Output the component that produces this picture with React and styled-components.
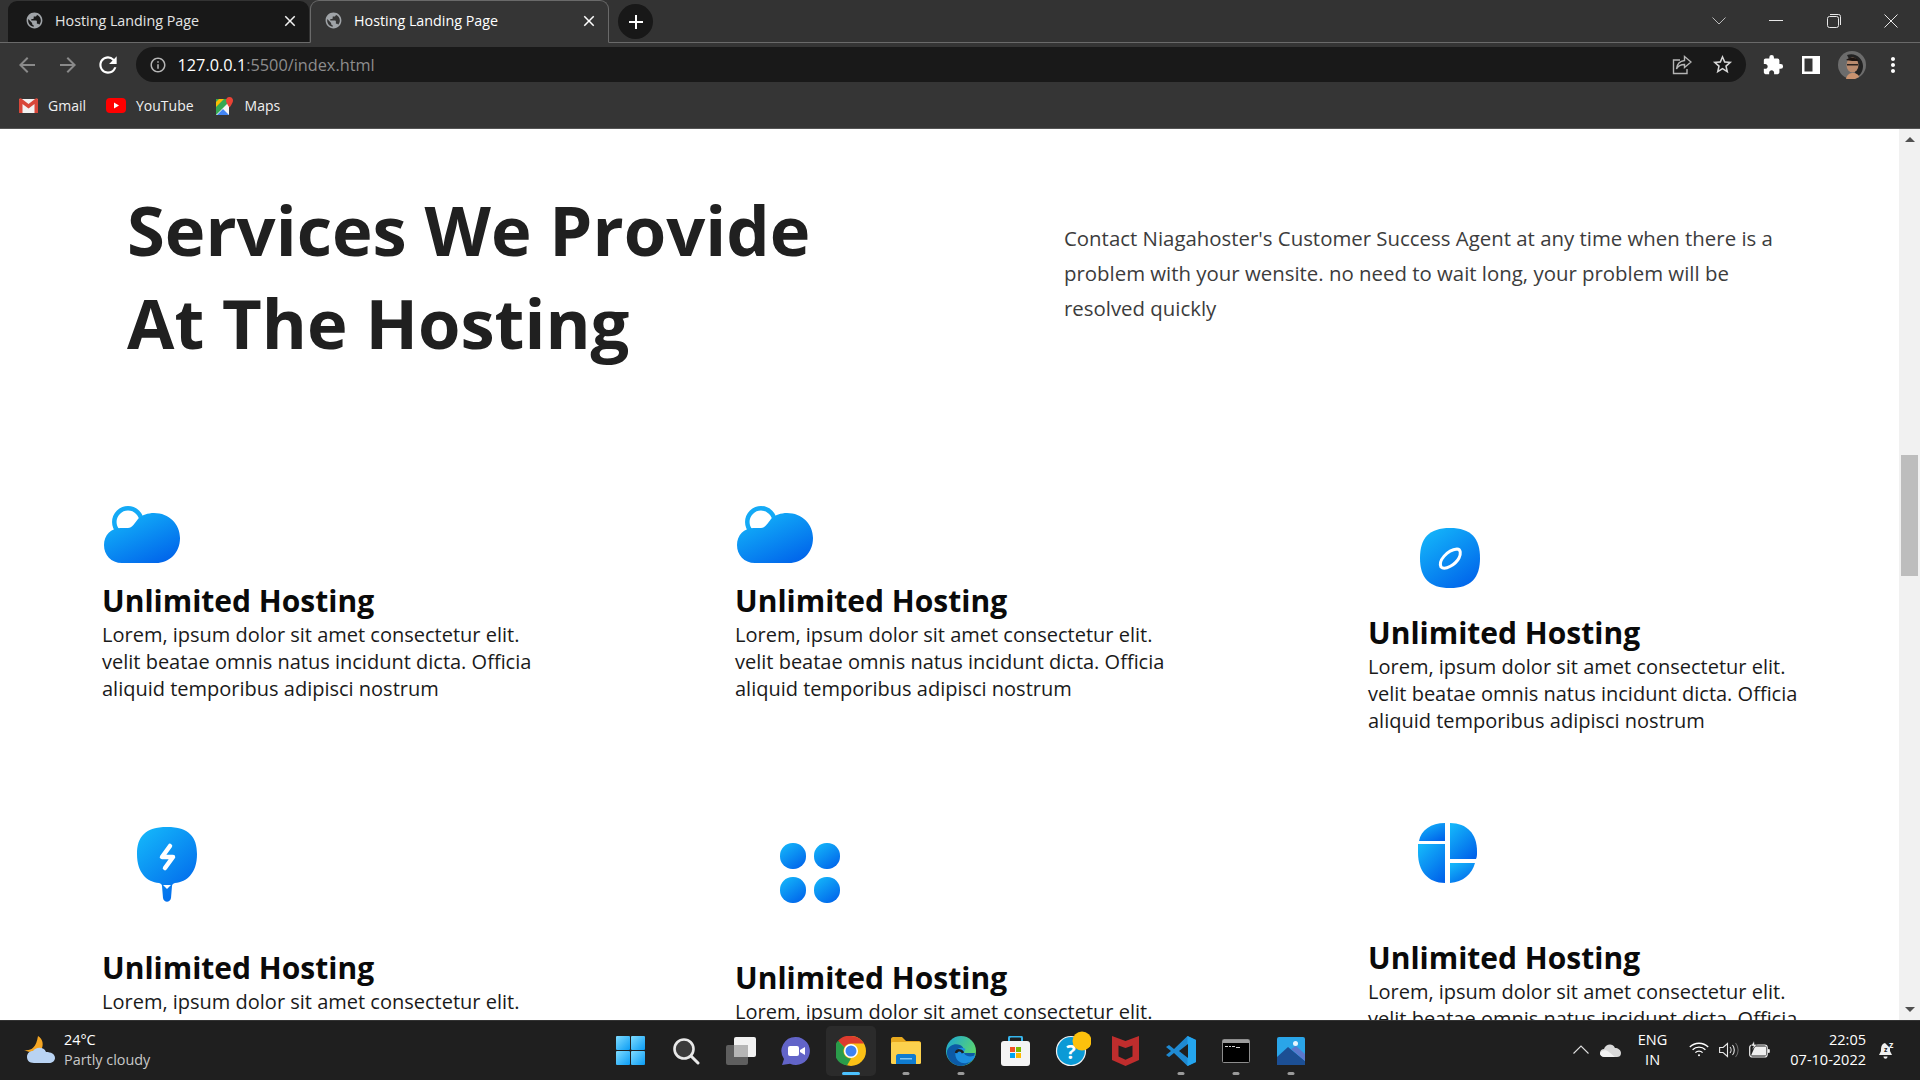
import React from 'react'
import styled, { createGlobalStyle } from 'styled-components'
import { MdPublic, MdClose, MdAdd, MdArrowBack, MdArrowForward, MdRefresh, MdInfoOutline, MdStarBorder, MdExtension, MdMoreVert } from 'react-icons/md'

const Global = createGlobalStyle`
    html, body { margin: 0; padding: 0; height: 100%; overflow: hidden; }
    body { font-family: "Open Sans", "Noto Sans", sans-serif; }
    * { box-sizing: border-box; }
`

const Screen = styled.div`
    width: 1920px;
    height: 1080px;
    display: flex;
    flex-direction: column;
    overflow: hidden;
    background: #fff;
`

/* browser chrome */
const TabStrip = styled.div`
    height: 43px;
    flex: none;
    display: flex;
    align-items: flex-end;
    padding-left: 8px;
    background: #333333;
    border-bottom: 1px solid #6a6a6a;
`
const Tab = styled.div`
    width: ${p => (p.$active ? 299 : 301)}px;
    height: ${p => (p.$active ? 43 : 41)}px;
    margin-bottom: ${p => (p.$active ? -1 : 0)}px;
    margin-right: 1px;
    display: flex;
    align-items: center;
    padding: 0 ${p => (p.$active ? 10 : 10)}px 2px ${p => (p.$active ? 13 : 17)}px;
    gap: 11px;
    border-radius: 9px 9px 0 0;
    font-size: 14.3px;
    color: ${p => (p.$active ? '#fff' : '#e4e4e4')};
    background: ${p => (p.$active ? '#353535' : '#181818')};
    border: ${p => (p.$active ? '1px solid #6a6a6a' : 'none')};
    border-bottom: ${p => (p.$active ? '1px solid #353535' : 'none')};
    svg { flex: none; }
`
const TabTitle = styled.span`
    flex: 1;
    white-space: nowrap;
`
const NewTab = styled.div`
    width: 35px;
    height: 35px;
    margin: 0 0 3px 8px;
    border-radius: 50%;
    background: #181818;
    color: #fff;
    display: flex;
    align-items: center;
    justify-content: center;
`
const WindowControls = styled.div`
    margin-left: auto;
    align-self: center;
    display: flex;
    align-items: center;
`
const WindowButton = styled.div`
    width: 57.5px;
    height: 26px;
    display: flex;
    align-items: center;
    justify-content: center;
`
const Toolbar = styled.div`
    height: 43px;
    flex: none;
    display: flex;
    align-items: center;
    background: #353535;
    padding-left: 15px;
`
const NavButton = styled.div`
    width: 40.5px;
    display: flex;
    margin-left: ${p => (p.$dim ? 0 : -1)}px;
    color: ${p => (p.$dim ? '#8a8a8a' : '#fff')};
`
const UrlBar = styled.div`
    width: 1610px;
    height: 35px;
    border-radius: 18px;
    background: #191919;
    display: flex;
    align-items: center;
    padding: 0 12px 0 13px;
    color: #b5b5b5;
`
const UrlText = styled.div`
    margin-left: 11px;
    font-size: 16.3px;
    color: #8d8d8d;
    white-space: nowrap;
`
const UrlHost = styled.span`
    color: #fff;
`
const UrlActions = styled.div`
    margin-left: auto;
    display: flex;
    align-items: center;
    gap: 19px;
`
const ToolIcons = styled.div`
    display: flex;
    align-items: center;
    margin-left: 16px;
    gap: 18px;
    color: #fff;
`
const Kebab = styled.div`
    display: flex;
    margin-left: -3px;
`
const BookmarkBar = styled.div`
    height: 43px;
    flex: none;
    display: flex;
    align-items: center;
    padding: 0 0 3px 19px;
    background: #353535;
    border-bottom: 1px solid #555;
`
const Bookmark = styled.div`
    display: flex;
    align-items: center;
    gap: ${p => p.$gap}px;
    margin-right: ${p => p.$mr}px;
    font-size: 14px;
    color: #f0f0f0;
`

/* page */
const Viewport = styled.div`
    flex: 1;
    min-height: 0;
    display: flex;
`
const Page = styled.main`
    flex: 1;
    min-width: 0;
    overflow: hidden;
    padding-top: 54px;
`
const Hero = styled.section`
    display: grid;
    grid-template-columns: 937px 740px;
    padding-left: 127px;
    margin-bottom: 136px;
`
const Heading = styled.h1`
    margin: 0;
    font-size: 68.7px;
    line-height: 93px;
    font-weight: 700;
    color: #202020;
`
const Intro = styled.p`
    margin: 38px 0 0;
    font-size: 20.4px;
    line-height: 35px;
    color: #3c3c3c;
`
const Services = styled.section`
    display: grid;
    grid-template-columns: repeat(3, 633px);
    grid-auto-rows: 315px;
    padding-left: 102px;
`
const Card = styled.article`
    width: 460px;
`
const IconSlot = styled.div`
    height: ${p => p.$height}px;
    padding: ${p => p.$top}px 0 0 ${p => p.$left}px;
    svg { display: block; }
`
const CardTitle = styled.h3`
    margin: 0;
    font-size: 30px;
    line-height: 40px;
    font-weight: 700;
    color: #0a0a0a;
`
const CardText = styled.p`
    margin: 0;
    font-size: 20px;
    line-height: 27px;
    color: #1a1a1a;
`
const Scrollbar = styled.div`
    width: 21px;
    flex: none;
    background: #f1f1f1;
    display: flex;
    flex-direction: column;
    align-items: center;
    padding-top: 8px;
`
const ArrowUp = styled.div`
    width: 0;
    height: 0;
    border-left: 5px solid transparent;
    border-right: 5px solid transparent;
    border-bottom: 5px solid #505050;
`
const ArrowDown = styled(ArrowUp)`
    margin-top: auto;
    margin-bottom: 8px;
    border-bottom: none;
    border-top: 5px solid #505050;
`
const Thumb = styled.div`
    width: 17px;
    height: 121px;
    margin-top: 313px;
    background: #bdbdbd;
`

/* taskbar */
const Taskbar = styled.footer`
    height: 60px;
    flex: none;
    display: grid;
    grid-template-columns: 1fr auto 1fr;
    align-items: center;
    background: #1f1f1f;
    border-top: 1px solid #333;
    color: #fff;
`
const Weather = styled.div`
    display: flex;
    align-items: center;
    padding: 0 0 2px 24px;
    gap: 9px;
`
const WeatherText = styled.div`
    font-size: 14.4px;
    line-height: 20px;
`
const WeatherSub = styled.div`
    color: #c8c8c8;
`
const AppRow = styled.div`
    display: flex;
    gap: 5px;
    margin-left: 1px;
`
const AppButton = styled.div`
    position: relative;
    width: 50px;
    height: 50px;
    border-radius: 5px;
    display: flex;
    align-items: center;
    justify-content: center;
    background: ${p => (p.$active ? '#2b2b2b' : 'transparent')};
`
const RunDot = styled.span`
    position: absolute;
    bottom: 1px;
    left: 50%;
    height: 3px;
    width: ${p => (p.$active ? 18 : 7)}px;
    transform: translateX(-50%);
    border-radius: 2px;
    background: ${p => (p.$active ? '#4cc2ff' : '#9a9a9a')};
`
const Tray = styled.div`
    display: flex;
    align-items: center;
    justify-content: flex-end;
    padding: 0 24px 2px 0;
    font-size: 14.5px;
    line-height: 20px;
`
const TrayIcon = styled.div`
    display: flex;
    margin-right: ${p => p.$mr || 0}px;
`
const Lang = styled.div`
    text-align: center;
    margin-right: 22px;
`
const Clock = styled.div`
    text-align: right;
    margin-right: 12px;
`

/* drawings */
const Blue = ({ id }) => (
    <defs>
        <linearGradient id={id} x1="0.15" y1="0" x2="0.85" y2="1">
            <stop offset="0" stopColor="#14b6fa" />
            <stop offset="1" stopColor="#0062ea" />
        </linearGradient>
    </defs>
)

const CloudIcon = ({ id }) => (
    <svg width="78" height="60" viewBox="0 0 78 60">
        <Blue id={id} />
        <circle cx="24" cy="17" r="13.700" fill="none" stroke="#14aaf6" strokeWidth="4.500" />
        <path d="M18 58C7 58 0 50 0 40c0-10 7-17 17-17h7c4 0 7-5 10-9 4-4 10-6 16-6 15 0 26 11 26 25 0 15-11 25-24 25z" fill={`url(#${id})`} />
    </svg>
)

const CompassIcon = ({ id }) => (
    <svg width="60" height="60" viewBox="0 0 60 60">
        <Blue id={id} />
        <path d="M30 0c21 0 30 10 30 30S51 60 30 60 0 50 0 30 9 0 30 0z" fill={`url(#${id})`} />
        <path d="M21 39c-3-6 6-17 16-18 4 0 4 5 2 9-3 6-14 13-18 9z" fill="none" stroke="#fff" strokeWidth="3" />
    </svg>
)

const BoltIcon = ({ id }) => (
    <svg width="60" height="75" viewBox="0 0 60 75">
        <Blue id={id} />
        <path d="M30 0c22 0 30 10 30 27 0 19-10 28-22 29-2 .5-3 1.500-3 3l-1 12c-1 5-7 5-8 0l-1-12c0-1.500-1-2.500-3-3C10 55 0 46 0 27 0 10 8 0 30 0z" fill={`url(#${id})`} />
        <path d="M33 19l-8 11h11l-8 11" fill="none" stroke="#fff" strokeWidth="4.500" strokeLinecap="round" strokeLinejoin="round" />
        <path d="M26 58h8l-4 4z" fill="#fff" />
    </svg>
)

const DotsIcon = ({ id }) => (
    <svg width="60" height="60" viewBox="0 0 60 60">
        <Blue id={id} />
        <g fill={`url(#${id})`}>
            <rect x="0" y="0" width="26" height="26" rx="12.500" />
            <rect x="34" y="0" width="26" height="26" rx="12.500" />
            <rect x="0" y="34" width="26" height="26" rx="12.500" />
            <rect x="34" y="34" width="26" height="26" rx="12.500" />
        </g>
    </svg>
)

const PieIcon = ({ id }) => (
    <svg width="59" height="60" viewBox="0 0 59 60">
        <Blue id={id} />
        <g fill={`url(#${id})`}>
            <path d="M27 0v18H1C3 7 13 0 27 0z" />
            <path d="M0 21h27v39C10 60 0 48 0 30z" />
            <path d="M32 0c17 0 27 11 27 28 0 4 0 6-1 8H32z" />
            <path d="M32 40h25c-3 11-12 19-25 20z" />
        </g>
    </svg>
)

const ShareIcon = () => (
    <svg width="20" height="20" viewBox="0 0 20 20" fill="none" stroke="#b5b5b5" strokeWidth="1.400">
        <path d="M8 5H1.500v13.500H15V14" />
        <path d="M12.500 1.500L19 7l-6.500 5.500V9.500C8.500 9.500 6 11 4.500 14c.5-5 3.500-8 8-8.500z" />
    </svg>
)

const PanelIcon = () => (
    <svg width="18" height="18" viewBox="0 0 18 18">
        <path d="M0 0h18v18H0z" fill="#fff" />
        <path d="M2.500 2.500h8v13h-8z" fill="#353535" />
    </svg>
)

const Avatar = () => (
    <svg width="28" height="28" viewBox="0 0 28 28">
        <circle cx="14" cy="14" r="14" fill="#6c6c6c" />
        <path d="M9 4c8-3 16 3 16 11 0 6-3 9-6 11l-6-14z" fill="#222" />
        <ellipse cx="14.500" cy="14" rx="6" ry="7.500" fill="#b98a6d" />
        <path d="M8 9c4-3 10-3 13 1-5 0-9 0-13-1z" fill="#1d1512" />
        <path d="M9 13h11v1.500H9z" fill="#2a2320" />
        <path d="M8 28c1-5 4-6 7-6s6 2 6 4l-4 2z" fill="#c9926f" />
    </svg>
)

const GmailIcon = () => (
    <svg width="19" height="15" viewBox="0 0 19 15">
        <path d="M0 1h19v14H0z" fill="#f2f2f2" />
        <path d="M0 15V2c0-2 2-2 3-1l6.500 5L16 1c1-1 3-1 3 1v13h-3.500V6L9.500 10.500 3.500 6v9z" fill="#d8473a" />
    </svg>
)

const YoutubeIcon = () => (
    <svg width="20" height="15" viewBox="0 0 20 15">
        <rect width="20" height="15" rx="4" fill="#f00" />
        <path d="M8 4.500l5 3-5 3z" fill="#fff" />
    </svg>
)

const MapsIcon = () => (
    <svg width="18" height="18" viewBox="0 0 18 18">
        <path d="M0 2h13v16H0z" fill="#35a853" />
        <path d="M0 18L13 5v13z" fill="#f4f4f4" />
        <path d="M1 18l6-6 6 6z" fill="#4285f4" />
        <path d="M3 2h5L0 10V5z" fill="#fbbc04" />
        <path d="M13.500 0C11 0 10 2 10 3.500c0 2.500 3.500 7 3.500 7S17 6 17 3.500C17 2 16 0 13.500 0z" fill="#ea4335" />
    </svg>
)

const WeatherIcon = () => (
    <svg width="31" height="28" viewBox="0 0 31 28">
        <path d="M14 0c5 3 6 9 3 14-3 3-11 3-17 0 6 1 12-1 14-14z" fill="#f5a623" />
        <path d="M10 27c-5 0-7-3-7-6 0-4 3-6 6-6 2-4 11-5 13 1 5 0 9 2 9 6 0 3-3 5-6 5z" fill="#b9d3f3" />
    </svg>
)

const WindowsIcon = () => (
    <svg width="29" height="29" viewBox="0 0 29 29">
        <defs>
            <linearGradient id="win" x1="0" y1="0" x2="1" y2="1">
                <stop offset="0" stopColor="#7fdcff" />
                <stop offset="1" stopColor="#0a9cf5" />
            </linearGradient>
        </defs>
        <g fill="url(#win)">
            <rect width="14" height="14" rx="1" />
            <rect x="15" width="14" height="14" rx="1" />
            <rect y="15" width="14" height="14" rx="1" />
            <rect x="15" y="15" width="14" height="14" rx="1" />
        </g>
    </svg>
)

const SearchIcon = () => (
    <svg width="28" height="28" viewBox="0 0 28 28" fill="none">
        <circle cx="12" cy="12" r="9.500" fill="#3a3a3a" stroke="#e8e8e8" strokeWidth="2.600" />
        <path d="M19 19l7 7" stroke="#e8e8e8" strokeWidth="3" strokeLinecap="round" />
    </svg>
)

const TaskViewIcon = () => (
    <svg width="30" height="28" viewBox="0 0 30 28">
        <rect y="8" width="22" height="20" rx="2" fill="#5e5e5e" />
        <rect x="8" width="22" height="20" rx="2" fill="#f2f2f2" />
        <rect x="8" y="8" width="14" height="12" fill="#b5b5b5" />
    </svg>
)

const ChatIcon = () => (
    <svg width="30" height="30" viewBox="0 0 30 30">
        <path d="M15 1a14 14 0 1 1-6 26.700L1 29l2-6A14 14 0 0 1 15 1z" fill="#6264c8" />
        <rect x="7" y="10" width="11" height="10" rx="2" fill="#fff" />
        <path d="M19 14l5-3v8l-5-3z" fill="#fff" />
    </svg>
)

const ChromeIcon = () => (
    <svg width="30" height="30" viewBox="0 0 30 30">
        <circle cx="15" cy="15" r="15" fill="#fbc116" />
        <path d="M15 0a15 15 0 0 1 13 7.500H15a7.500 7.500 0 0 0-6.500 3.750L2 4.800A15 15 0 0 1 15 0z" fill="#dd3b2e" />
        <path d="M2 4.800l6.500 6.450A7.500 7.500 0 0 0 15 22.500l-4 7A15 15 0 0 1 2 4.800z" fill="#2a9c4a" />
        <circle cx="15" cy="15" r="7" fill="#fff" />
        <circle cx="15" cy="15" r="5.500" fill="#3f82f0" />
    </svg>
)

const FolderIcon = () => (
    <svg width="30" height="27" viewBox="0 0 30 27">
        <path d="M0 2c0-1 1-2 2-2h9l4 4h13c1 0 2 1 2 2v4H0z" fill="#e8a91e" />
        <rect y="5" width="30" height="22" rx="1.500" fill="#fcd14d" />
        <path d="M5 27v-8c0-1 1-2 2-2h16c1 0 2 1 2 2v8z" fill="#0f7cd0" />
        <path d="M9 21h12v1.500H9z" fill="#7fc6f5" />
    </svg>
)

const EdgeIcon = () => (
    <svg width="30" height="30" viewBox="0 0 30 30">
        <defs>
            <linearGradient id="edge" x1="0" y1="0" x2="1" y2="0.6">
                <stop offset="0" stopColor="#1aa5d8" />
                <stop offset="1" stopColor="#5fd868" />
            </linearGradient>
        </defs>
        <circle cx="15" cy="15" r="15" fill="url(#edge)" />
        <path d="M1 15c2-6 8-8 13-6 4 2 5 6 3 8h12c-1 8-8 13-14 13C7 30 0 23 1 15z" fill="#0c5aa6" />
        <path d="M29.500 19c-3 2-9 2-11-1-1-2 0-4 1-5-5-3-11 0-10 7 1 5 6 8 11 7 5-1 8-4 9-8z" fill="#1d8fe0" />
        <path d="M17 17c-1-3-6-4-7 0" fill="none" stroke="#1f1f1f" strokeWidth="2.500" />
    </svg>
)

const StoreIcon = () => (
    <svg width="29" height="30" viewBox="0 0 29 30">
        <path d="M8 5V2c0-1 1-1.500 2-1.500h9c1 0 2 .5 2 1.500v3" fill="none" stroke="#35b5ec" strokeWidth="2" />
        <rect y="5" width="29" height="25" rx="3" fill="#f4f4f4" />
        <rect x="9" y="11" width="5" height="5" fill="#f25022" />
        <rect x="15" y="11" width="5" height="5" fill="#7fba00" />
        <rect x="9" y="17" width="5" height="5" fill="#00a4ef" />
        <rect x="15" y="17" width="5" height="5" fill="#ffb900" />
    </svg>
)

const HelpIcon = () => (
    <svg width="40" height="40" viewBox="0 0 40 40">
        <circle cx="20" cy="20" r="14.500" fill="#0b9ad6" stroke="#f0f0f0" strokeWidth="1.200" />
        <text x="20" y="28" textAnchor="middle" fontFamily="Open Sans" fontWeight="700" fontSize="20" fill="#fff">?</text>
        <circle cx="31" cy="10" r="9.500" fill="#fdc10c" />
    </svg>
)

const McafeeIcon = () => (
    <svg width="27" height="30" viewBox="0 0 27 30">
        <path d="M0 0l13.500 5L27 0v24l-13.500 6L0 24z" fill="#bf2d2d" />
        <path d="M6.500 9.500l7 2.500 7-2.500v11l-7 3.200-7-3.200z" fill="#1f1f1f" />
    </svg>
)

const VscodeIcon = () => (
    <svg width="30" height="30" viewBox="0 0 30 30">
        <path d="M21.500 0L30 4v22l-8.500 4L8 17l-5 4-3-2 5-4-5-4 3-2 5 4z" fill="#1f8ad2" />
        <path d="M21.500 0L30 4v22l-8.500 4z" fill="#24a5ee" />
        <path d="M22 8v14l-9-7z" fill="#1f1f1f" />
    </svg>
)

const TerminalIcon = () => (
    <svg width="28" height="24" viewBox="0 0 28 24">
        <rect x="0.500" y="0.500" width="27" height="23" rx="1" fill="#000" stroke="#8d8d8d" />
        <rect x="1" y="1" width="26" height="3" fill="#9c9c9c" />
        <path d="M3 7h3v1H3zm4 0h2v1H7zm3 0h3v1h-3zm4 1h4v1h-4z" fill="#d0d0d0" />
    </svg>
)

const PhotosIcon = () => (
    <svg width="28" height="28" viewBox="0 0 28 28">
        <rect width="28" height="28" rx="2" fill="#2aa5e8" />
        <circle cx="18.500" cy="6.500" r="2.500" fill="#e8f6ff" />
        <path d="M0 28V20L11 10l17 14v4z" fill="#1c4f94" />
        <path d="M14 12l5-3 9 8v7z" fill="#5b78cc" />
    </svg>
)

const TrayChevron = () => (
    <svg width="16" height="9" viewBox="0 0 16 9" fill="none" stroke="#e0e0e0" strokeWidth="1.100">
        <path d="M.5 8.500L8 1l7.500 7.500" />
    </svg>
)

const OneDriveIcon = () => (
    <svg width="21" height="14" viewBox="0 0 21 14">
        <path d="M5 14c-3 0-5-1.500-5-4s2-4 4-4c1-4 8-7 11-1 3 0 6 2 6 5s-2 4-4 4z" fill="#d8d8d8" />
        <path d="M0 10c2-3 6-4 9-1l6 5H5c-3 0-5-1.500-5-4z" fill="#f2f2f2" />
    </svg>
)

const WifiIcon = () => (
    <svg width="20" height="15" viewBox="0 0 20 15" fill="none" stroke="#fff" strokeWidth="1.300">
        <path d="M.8 5c5-5 13.400-5 18.400 0M3.600 7.800c3.500-3.500 9.300-3.500 12.800 0M6.400 10.600c2-2 5.200-2 7.200 0" />
        <circle cx="10" cy="13.200" r="1" fill="#fff" stroke="none" />
    </svg>
)

const VolumeIcon = () => (
    <svg width="20" height="16" viewBox="0 0 20 16" fill="none" stroke="#e8e8e8" strokeWidth="1.100">
        <path d="M.6 5.500h3.500L8.500 1.500v13l-4.400-4H.6z" />
        <path d="M11 5c1.400 1.600 1.400 4.400 0 6M13.500 3c2.400 2.800 2.400 7.200 0 10" />
        <path d="M16.500 1c3.500 4 3.500 10 0 14" stroke="#6a6a6a" />
    </svg>
)

const BatteryIcon = () => (
    <svg width="21" height="17" viewBox="0 0 21 17">
        <rect x="0.700" y="4" width="17.500" height="12" rx="2.500" fill="none" stroke="#efefef" strokeWidth="1.200" />
        <path d="M2 14.500L6 5.500h11v9z" fill="#efefef" />
        <rect x="18.800" y="8" width="2" height="4" rx="1" fill="#efefef" />
        <path d="M5 0L2 5h2.500L3 9l5-5.500H5.500z" fill="#efefef" stroke="#1f1f1f" strokeWidth="0.500" />
    </svg>
)

const BellIcon = () => (
    <svg width="18" height="20" viewBox="0 0 18 20">
        <path d="M7 3C3 4 3 8 3 11l-2 4h13l-2-4V8" fill="#f0f0f0" />
        <path d="M5.500 16.500h4c0 3-4 3-4 0z" fill="#f0f0f0" />
        <text x="6" y="12" fontSize="7" fontWeight="700" fontFamily="Open Sans" fill="#1f1f1f">z</text>
        <text x="11" y="8" fontSize="9" fontWeight="700" fontFamily="Open Sans" fill="#f0f0f0">z</text>
    </svg>
)

const services = [
    { id: 'c1', Icon: CloudIcon, height: 76, top: 0, left: 2 },
    { id: 'c2', Icon: CloudIcon, height: 76, top: 0, left: 2 },
    { id: 'c3', Icon: CompassIcon, height: 108, top: 23, left: 52 },
    { id: 'c4', Icon: BoltIcon, height: 128, top: 7, left: 35 },
    { id: 'c5', Icon: DotsIcon, height: 138, top: 23, left: 45 },
    { id: 'c6', Icon: PieIcon, height: 118, top: 3, left: 50 },
]

const apps = [
    { Icon: WindowsIcon },
    { Icon: SearchIcon },
    { Icon: TaskViewIcon },
    { Icon: ChatIcon },
    { Icon: ChromeIcon, active: true },
    { Icon: FolderIcon, running: true },
    { Icon: EdgeIcon, running: true },
    { Icon: StoreIcon },
    { Icon: HelpIcon },
    { Icon: McafeeIcon },
    { Icon: VscodeIcon, running: true },
    { Icon: TerminalIcon, running: true },
    { Icon: PhotosIcon, running: true },
]

const App = () => (
    <Screen>
        <Global />
        <TabStrip>
            <Tab>
                <MdPublic size={19} color="#a0a4a8" />
                <TabTitle>Hosting Landing Page</TabTitle>
                <MdClose size={18} color="#f2f2f2" />
            </Tab>
            <Tab $active>
                <MdPublic size={19} color="#a0a4a8" />
                <TabTitle>Hosting Landing Page</TabTitle>
                <MdClose size={18} color="#fff" />
            </Tab>
            <NewTab><MdAdd size={24} /></NewTab>
            <WindowControls>
                <WindowButton>
                    <svg width="14" height="8" viewBox="0 0 14 8" fill="none" stroke="#bbb"><path d="M.5.500L7 7l6.500-6.500" /></svg>
                </WindowButton>
                <WindowButton>
                    <svg width="14" height="2" viewBox="0 0 14 2"><path d="M0 0h14v1H0z" fill="#e8e8e8" /></svg>
                </WindowButton>
                <WindowButton>
                    <svg width="14" height="14" viewBox="0 0 14 14" fill="none" stroke="#e8e8e8"><rect x="0.500" y="2.500" width="11" height="11" rx="2" /><path d="M3 .5h8.500a2 2 0 0 1 2 2V11" /></svg>
                </WindowButton>
                <WindowButton>
                    <svg width="14" height="14" viewBox="0 0 14 14" stroke="#e8e8e8"><path d="M.5.500l13 13M13.500.500l-13 13" /></svg>
                </WindowButton>
            </WindowControls>
        </TabStrip>
        <Toolbar>
            <NavButton $dim><MdArrowBack size={24} /></NavButton>
            <NavButton $dim><MdArrowForward size={24} /></NavButton>
            <NavButton><MdRefresh size={26} /></NavButton>
            <UrlBar>
                <MdInfoOutline size={18} />
                <UrlText><UrlHost>127.0.0.1</UrlHost>:5500/index.html</UrlText>
                <UrlActions>
                    <ShareIcon />
                    <MdStarBorder size={23} color="#d8d8d8" />
                </UrlActions>
            </UrlBar>
            <ToolIcons>
                <MdExtension size={22} />
                <PanelIcon />
                <Avatar />
                <Kebab><MdMoreVert size={24} /></Kebab>
            </ToolIcons>
        </Toolbar>
        <BookmarkBar>
            <Bookmark $gap={10} $mr={20}><GmailIcon />Gmail</Bookmark>
            <Bookmark $gap={10} $mr={22}><YoutubeIcon />YouTube</Bookmark>
            <Bookmark $gap={11} $mr={0}><MapsIcon />Maps</Bookmark>
        </BookmarkBar>
        <Viewport>
            <Page>
                <Hero>
                    <Heading>Services We Provide<br />At The Hosting</Heading>
                    <Intro>Contact Niagahoster's Customer Success Agent at any time when there is a problem with your wensite. no need to wait long, your problem will be resolved quickly</Intro>
                </Hero>
                <Services>
                    {services.map(({ id, Icon, height, top, left }) => (
                        <Card key={id}>
                            <IconSlot $height={height} $top={top} $left={left}><Icon id={id} /></IconSlot>
                            <CardTitle>Unlimited Hosting</CardTitle>
                            <CardText>Lorem, ipsum dolor sit amet consectetur elit. velit beatae omnis natus incidunt dicta. Officia aliquid temporibus adipisci nostrum</CardText>
                        </Card>
                    ))}
                </Services>
            </Page>
            <Scrollbar>
                <ArrowUp />
                <Thumb />
                <ArrowDown />
            </Scrollbar>
        </Viewport>
        <Taskbar>
            <Weather>
                <WeatherIcon />
                <WeatherText>
                    24°C
                    <WeatherSub>Partly cloudy</WeatherSub>
                </WeatherText>
            </Weather>
            <AppRow>
                {apps.map(({ Icon, active, running }, i) => (
                    <AppButton key={i} $active={active}>
                        <Icon />
                        {(active || running) && <RunDot $active={active} />}
                    </AppButton>
                ))}
            </AppRow>
            <Tray>
                <TrayIcon $mr={11}><TrayChevron /></TrayIcon>
                <TrayIcon $mr={17}><OneDriveIcon /></TrayIcon>
                <Lang>ENG<br />IN</Lang>
                <TrayIcon $mr={10}><WifiIcon /></TrayIcon>
                <TrayIcon $mr={10}><VolumeIcon /></TrayIcon>
                <TrayIcon $mr={20}><BatteryIcon /></TrayIcon>
                <Clock>22:05<br />07-10-2022</Clock>
                <BellIcon />
            </Tray>
        </Taskbar>
    </Screen>
)

export default App
